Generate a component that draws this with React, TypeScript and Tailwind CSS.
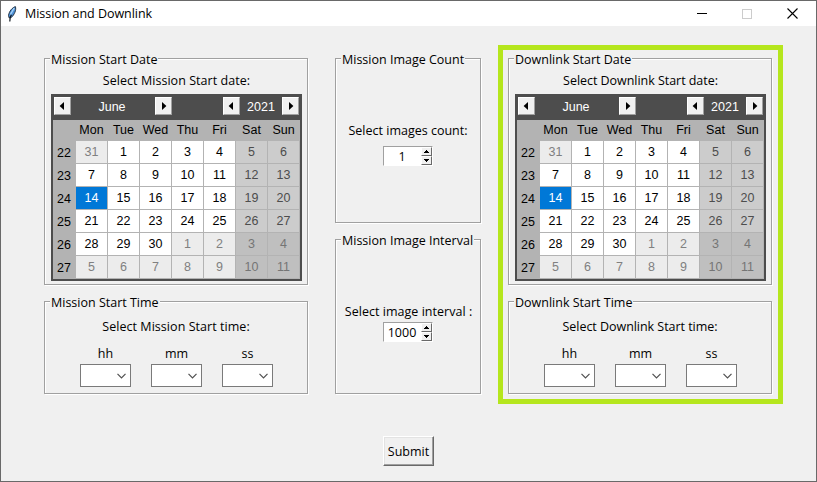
import type { ReactNode } from "react";

const DAYS = ["Mon", "Tue", "Wed", "Thu", "Fri", "Sat", "Sun"];

const WEEKS = [
  { no: 22, days: [31, 1, 2, 3, 4, 5, 6] },
  { no: 23, days: [7, 8, 9, 10, 11, 12, 13] },
  { no: 24, days: [14, 15, 16, 17, 18, 19, 20] },
  { no: 25, days: [21, 22, 23, 24, 25, 26, 27] },
  { no: 26, days: [28, 29, 30, 1, 2, 3, 4] },
  { no: 27, days: [5, 6, 7, 8, 9, 10, 11] },
];

function isOtherMonth(row: number, day: number) {
  return (row === 0 && day > 20) || (row >= 4 && day < 20);
}

function cellClass(row: number, col: number, day: number) {
  const other = isOtherMonth(row, day);
  if (row === 2 && col === 0) return "bg-[#0078d7] text-white";
  if (col >= 5) return other ? "bg-[#bfbfbf] text-[#757575]" : "bg-[#cccccc] text-[#4d4d4d]";
  return other ? "bg-[#ececec] text-[#808080]" : "bg-white text-black";
}

function Group({ title, className, children }: { title: string; className: string; children: ReactNode }) {
  return (
    <section
      className={`flex flex-col items-center border border-[#a0a0a0] shadow-[1px_1px_0_#fff,inset_1px_1px_0_#fff] ${className}`}
    >
      <h2 className="-mt-2 ml-[5px] h-4 self-start bg-[#f0f0f0] px-px text-[12.5px] leading-[18px]">{title}</h2>
      {children}
    </section>
  );
}

function ArrowButton({ dir }: { dir: "left" | "right" }) {
  return (
    <button className="flex h-[18px] w-[17px] items-center border border-t-white border-l-white border-r-[#a0a0a0] border-b-[#a0a0a0] bg-[#f0f0f0] pl-[4px]">
      <svg width="7" height="8" viewBox="0 0 7 8">
        <path d={dir === "left" ? "M5 0V8L.6 4z" : "M2 0V8L6.4 4z"} fill="#000" />
      </svg>
    </button>
  );
}

function Calendar() {
  return (
    <div className="h-[187px] w-[251px] bg-[#4d4d4d] px-[2px] font-['Liberation_Sans',Arial,sans-serif] text-[12.5px] text-black">
      <div className="flex h-[26px] items-start px-px pt-[3px] text-white">
        <ArrowButton dir="left" />
        <span className="w-[84px] pr-[2px] text-center leading-[20px]">June</span>
        <ArrowButton dir="right" />
        <span className="w-[51px]" />
        <ArrowButton dir="left" />
        <span className="w-[42px] text-center leading-[20px]">2021</span>
        <ArrowButton dir="right" />
      </div>
      <div className="grid grid-cols-[23px_repeat(7,32px)] bg-[#b3b3b3]">
        <span className="h-[21px]" />
        {DAYS.map((d) => (
          <span key={d} className="h-[21px] pr-px text-center leading-[20px]">
            {d}
          </span>
        ))}
        {WEEKS.map((w, row) => (
          <div key={w.no} className="col-span-8 grid h-[23px] grid-cols-subgrid grid-rows-[23px]">
            <span className="pr-px text-center leading-[24px]">{w.no}</span>
            {w.days.map((day, col) => (
              <span
                key={col}
                className={`mr-px mb-px text-center leading-[22px] ${cellClass(row, col, day)}`}
              >
                {day}
              </span>
            ))}
          </div>
        ))}
      </div>
    </div>
  );
}

function ComboBox({ label }: { label: string }) {
  return (
    <div className="flex w-[51px] flex-col items-center">
      <span className="h-[19px] leading-[18px]">{label}</span>
      <div className="flex h-[23px] w-[51px] items-center justify-end border border-[#7a7a7a] bg-white pr-[4px]">
        <svg width="9" height="6" viewBox="0 0 9 6" fill="none" stroke="#505050" strokeWidth="1.2">
          <path d="M.5 .8L4.5 4.8L8.5 .8" />
        </svg>
      </div>
    </div>
  );
}

function Spinner({ value }: { value: string }) {
  return (
    <div className="mr-px flex h-5 w-[50px] border border-t-[#a0a0a0] border-l-[#a0a0a0] border-r-white border-b-white bg-white">
      <span className="w-[37px] text-center leading-[20px]">{value}</span>
      <span className="flex w-[11px] flex-col">
        <SpinButton up />
        <SpinButton />
      </span>
    </div>
  );
}

function SpinButton({ up }: { up?: boolean }) {
  return (
    <span className="flex h-[9px] w-[11px] items-center justify-center border border-t-white border-l-white border-r-[#696969] border-b-[#696969] bg-[#f0f0f0]">
      <svg width="5" height="3" viewBox="0 0 5 3" shapeRendering="crispEdges">
        <path d={up ? "M2 0h1v1h1v1h1v1H0V2h1V1h1z" : "M0 0h5v1H4v1H3v1H2V2H1V1H0z"} fill="#000" />
      </svg>
    </span>
  );
}

function DateTimeColumn({ kind }: { kind: "Mission" | "Downlink" }) {
  const tracking = kind === "Mission" ? "tracking-[0.05px]" : "tracking-[-0.04px]";
  return (
    <div className="flex w-[264px] flex-col gap-4">
      <Group title={`${kind} Start Date`} className="h-[227px]">
        <p className={`h-[28px] pl-px leading-[28px] ${tracking}`}>{`Select ${kind} Start date:`}</p>
        <div className="-mt-px ml-[6px] w-[251px] self-start">
          <Calendar />
        </div>
      </Group>
      <Group title={`${kind} Start Time`} className="h-[93px]">
        <p className={`h-[35px] leading-[34px] ${tracking}`}>{`Select ${kind} Start time:`}</p>
        <div className="ml-[35px] flex gap-5 self-start">
          <ComboBox label="hh" />
          <ComboBox label="mm" />
          <ComboBox label="ss" />
        </div>
      </Group>
    </div>
  );
}

function Feather() {
  return (
    <svg width="10" height="16" viewBox="0 0 10 16">
      <path d="M8.4 .6C5.5 1.5 2.2 5 1.5 9.5L2.2 12L4.3 11.5C7.5 8.5 9.5 4 8.4 .6z" fill="#4d91d8" stroke="#182431" strokeWidth=".9" />
      <path d="M7.2 2L3.4 8.5" stroke="#a8d4f8" strokeWidth="1.4" />
      <path d="M4.4 8.8L3.2 11.5L2.8 15.5" fill="none" stroke="#101820" strokeWidth="1.2" />
    </svg>
  );
}

function TitleBar() {
  return (
    <header className="flex h-[25px] items-center bg-white">
      <span className="ml-[6px] w-[18px]">
        <Feather />
      </span>
      <h1 className="text-[12.5px] leading-[24px] tracking-[-0.04px]">Mission and Downlink</h1>
      <div className="mr-[18px] ml-auto flex items-center gap-[35px]">
        <svg width="10" height="11" shapeRendering="crispEdges">
          <path d="M0 5.5H10" stroke="#000" />
        </svg>
        <svg width="10" height="10" shapeRendering="crispEdges">
          <path d="M.5 .5h9v9h-9z" fill="none" stroke="#ccc" />
        </svg>
        <svg width="11" height="11">
          <path d="M.5 .5L10.5 10.5M10.5 .5L.5 10.5" stroke="#000" strokeWidth="1.1" />
        </svg>
      </div>
    </header>
  );
}

export default function App() {
  return (
    <div className="h-[482px] w-[817px] border border-[#696969] bg-[#f0f0f0] font-['Open_Sans','Noto_Sans',sans-serif] text-[12.5px] text-black">
      <TitleBar />
      <main>
        <div className="flex items-start pl-[43px]">
          <div className="pt-[32px]">
            <DateTimeColumn kind="Mission" />
          </div>
          <div className="ml-[27px] flex w-[146px] flex-col gap-4 pt-[32px]">
            <Group title="Mission Image Count" className="h-[165px]">
              <p className="mt-[54px] h-[25px] leading-[20px]">Select images count:</p>
              <Spinner value="1" />
            </Group>
            <Group title="Mission Image Interval" className="h-[155px]">
              <p className="mt-[54px] h-[20px] pl-px leading-[20px] tracking-[0.03px]">Select image interval :</p>
              <Spinner value="1000" />
            </Group>
          </div>
          <div className="mt-[19px] ml-[17px] h-[359px] w-[285px] border-5 border-[#b5e61d] pt-[8px] pl-[5px]">
            <DateTimeColumn kind="Downlink" />
          </div>
        </div>
        <button className="mt-[32px] ml-[382px] block h-[30px] w-[51px] border border-t-white border-l-white border-r-[#696969] border-b-[#696969] bg-[#f0f0f0] pt-[2px] shadow-[inset_-1px_-1px_0_#a0a0a0,inset_1px_1px_0_#e3e3e3]">
          Submit
        </button>
      </main>
    </div>
  );
}
